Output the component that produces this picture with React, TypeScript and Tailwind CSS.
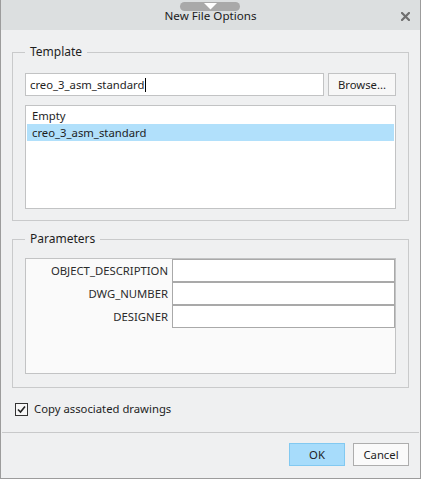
import { useState } from "react";

const PARAMS = ["OBJECT_DESCRIPTION", "DWG_NUMBER", "DESIGNER"];
const TEMPLATES = ["Empty", "creo_3_asm_standard"];

export default function App() {
  const [template, setTemplate] = useState("creo_3_asm_standard");
  const [copyDrawings, setCopyDrawings] = useState(true);

  return (
    <div
      className="relative flex h-[479px] w-[421px] flex-col border-x border-b border-[#9c9c9c] bg-[#eff0f1] text-[11.3px] leading-[16px] text-[#1e1e1e]"
      style={{ fontFamily: '"Noto Sans", "Open Sans", sans-serif' }}
    >
      {/* title bar */}
      <div className="relative flex h-[30px] shrink-0 items-center justify-center bg-[#dcdfe0]">
        <span className="pt-[2px] text-[11.6px] text-[#1b1b1b]">New File Options</span>
        <button className="absolute right-[10px] top-[11px] flex h-[10px] w-[10px] items-center justify-center">
          <svg width="9" height="9" viewBox="0 0 9 9">
            <path d="M1 1 L8 8 M8 1 L1 8" stroke="#6f6f6f" strokeWidth="2.2" strokeLinecap="square" />
          </svg>
        </button>
        {/* drag handle */}
        <div className="absolute left-[179px] top-[2px] flex h-[9px] w-[60px] items-start justify-center rounded-full bg-[#a9a9a9]">
          <svg width="13" height="7" viewBox="0 0 13 7" className="mt-[1px]">
            <path d="M0 0 L13 0 L6.5 6.5 Z" fill="#ffffff" />
          </svg>
        </div>
      </div>

      <div className="flex flex-1 flex-col px-[11px] pt-[14px]">
        <fieldset className="h-[177px] border border-[#c9cacb] px-[12px] pb-[12px] pt-[13px]">
          <legend className="px-[5px] text-[12px]">Template</legend>
          <div className="flex gap-[4px]">
            <div className="flex h-[23px] flex-1 items-center border border-[#c2c3c4] bg-white pl-[4px]">
              <span>{template}</span>
              <span className="ml-[1px] h-[14px] w-px bg-black" />
            </div>
            <button className="h-[23px] w-[68px] border border-[#c2c3c4] bg-[#f7f7f7]">Browse...</button>
          </div>
          <div className="mt-[9px] h-[104px] border border-[#c2c3c4] bg-white p-[1px]">
            {TEMPLATES.map((t) => (
              <div
                key={t}
                onClick={() => setTemplate(t)}
                className={
                  "h-[17px] pl-[5px] leading-[17px] " + (t === template ? "bg-[#b1e0fb]" : "")
                }
              >
                {t}
              </div>
            ))}
          </div>
        </fieldset>

        <fieldset className="mt-[10px] h-[157px] border border-[#c9cacb] px-[12px] pb-[13px] pt-[11px]">
          <legend className="px-[5px] text-[12px]">Parameters</legend>
          <div className="h-[116px] border border-[#c2c3c4] bg-[#fafafa]">
            {PARAMS.map((p) => (
              <div key={p} className="flex h-[23px]">
                <div className="flex w-[146px] items-center justify-end pr-[4px] text-[#2b2b2b]">{p}</div>
                <div className="flex-1 border border-[#a9a9a9] bg-white" />
              </div>
            ))}
          </div>
        </fieldset>

        <label className="mt-[13px] flex items-center gap-[6px] pl-[3px]">
          <span
            onClick={() => setCopyDrawings(!copyDrawings)}
            className="flex h-[13px] w-[13px] items-center justify-center border border-[#333333] bg-[#f7f7f7]"
          >
            {copyDrawings ? (
              <svg width="9" height="9" viewBox="0 0 9 9">
                <path d="M1 4.5 L3.5 7 L8 1.5" fill="none" stroke="#222222" strokeWidth="1.6" />
              </svg>
            ) : null}
          </span>
          <span>Copy associated drawings</span>
        </label>
      </div>

      <div className="mx-[1px] border-t border-[#c8c9ca]" />
      <div className="flex h-[45px] items-start justify-end gap-[8px] pr-[11px] pt-[10px]">
        <button className="h-[23px] w-[56px] border border-[#82c9f1] bg-[#a7dcfb]">OK</button>
        <button className="h-[23px] w-[56px] border border-[#adadad] bg-[#fafafa]">Cancel</button>
      </div>
    </div>
  );
}
